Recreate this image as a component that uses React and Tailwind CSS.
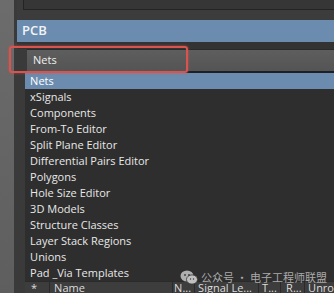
export default function App() {
  const items = [
    "xSignals",
    "Components",
    "From-To Editor",
    "Split Plane Editor",
    "Differential Pairs Editor",
    "Polygons",
    "Hole Size Editor",
    "3D Models",
    "Structure Classes",
    "Layer Stack Regions",
    "Unions",
    "Pad _Via Templates",
  ];
  const font = { fontFamily: '"Open Sans", "Noto Sans", sans-serif' };
  return (
    <div className="relative w-[334px] h-[293px] overflow-hidden flex bg-[#2e2e2e]" style={font}>
      <div className="w-[14px] h-full bg-gradient-to-b from-[#6c6c6c] to-[#5e5e5e]" />
      <div className="w-[3px] h-full bg-[#3a3a3a]" />
      <div className="flex-1 flex flex-col min-w-0">
        <div className="h-[20px] shrink-0 bg-[#3c3c3c] pl-[6px]">
          <div className="h-[10px] bg-[#363636] border-l border-b border-[#242424]" />
        </div>
        <div className="h-[22px] shrink-0 bg-[#6b8cae] flex items-center pl-[5px] text-[13px] font-semibold text-[#f2f4f8]">
          PCB
        </div>
        <div className="h-[7px] shrink-0 bg-[#333333]" />
        <div className="h-[22px] shrink-0 flex bg-[#3a3a3a]">
          <div className="w-[10px]" />
          <div className="flex-1 bg-gradient-to-b from-[#5e5e5e] to-[#545454] border-t border-[#2a2a2a] flex items-center pl-[6px] text-[11px] text-[#f0f0f0]">
            Nets
          </div>
        </div>
        <div className="h-[2px] shrink-0 bg-[#1e2028]" />
        <div className="flex-1 flex">
          <div className="w-[10px] bg-[#3a3a3a]" />
          <div className="flex-1 flex flex-col bg-[#2e2e2e] text-[11px] text-[#e8e8e8]">
            <div className="h-[16px] shrink-0 bg-[#6b8cae] flex items-center pl-[5px] text-white">Nets</div>
            {items.map((t) => (
              <div key={t} className="h-[16px] shrink-0 flex items-center pl-[5px] whitespace-nowrap">
                {t}
              </div>
            ))}
            <div className="flex-1 flex bg-[#3d3d3d] text-[11px] text-[#dcdcdc] leading-[12px] border-t border-[#2a2a2a]">
              <div className="w-[25px] pl-[6px] border-r border-[#2a2a2a]">*</div>
              <div className="w-[123px] pl-[4px] border-r border-[#2a2a2a]">Name</div>
              <div className="w-[22px] pl-[1px] border-r border-[#2a2a2a]">N...</div>
              <div className="w-[64px] pl-[3px] border-r border-[#2a2a2a] whitespace-nowrap overflow-hidden">Signal Le...</div>
              <div className="w-[22px] pl-[3px] border-r border-[#2a2a2a]">T...</div>
              <div className="w-[24px] pl-[5px] border-r border-[#2a2a2a]">R...</div>
              <div className="flex-1 pl-[3px] whitespace-nowrap">Unro</div>
            </div>
          </div>
        </div>
      </div>
      <div className="absolute left-[9px] top-[46px] w-[179px] h-[27px] rounded-[3px] border-2 border-[#d9534f] shadow-[0_0_3px_rgba(217,83,79,0.7)] pointer-events-none" />
      <div className="absolute left-[180px] top-[269px] flex items-center gap-[3px] text-[11px] text-[#b8b8b8] opacity-90" style={{ fontFamily: '"Noto Sans CJK SC", sans-serif' }}>
        <svg width="18" height="15" viewBox="0 0 18 15">
          <ellipse cx="7" cy="6" rx="6.5" ry="5.5" fill="#bdbdbd" />
          <ellipse cx="12" cy="9.5" rx="5.5" ry="4.6" fill="#d0d0d0" stroke="#3a3a3a" strokeWidth="0.8" />
          <circle cx="5" cy="5" r="0.9" fill="#3a3a3a" />
          <circle cx="9" cy="5" r="0.9" fill="#3a3a3a" />
          <circle cx="10.5" cy="9" r="0.7" fill="#3a3a3a" />
          <circle cx="13.5" cy="9" r="0.7" fill="#3a3a3a" />
        </svg>
        <span className="whitespace-nowrap">公众号 · 电子工程师联盟</span>
      </div>
    </div>
  );
}
